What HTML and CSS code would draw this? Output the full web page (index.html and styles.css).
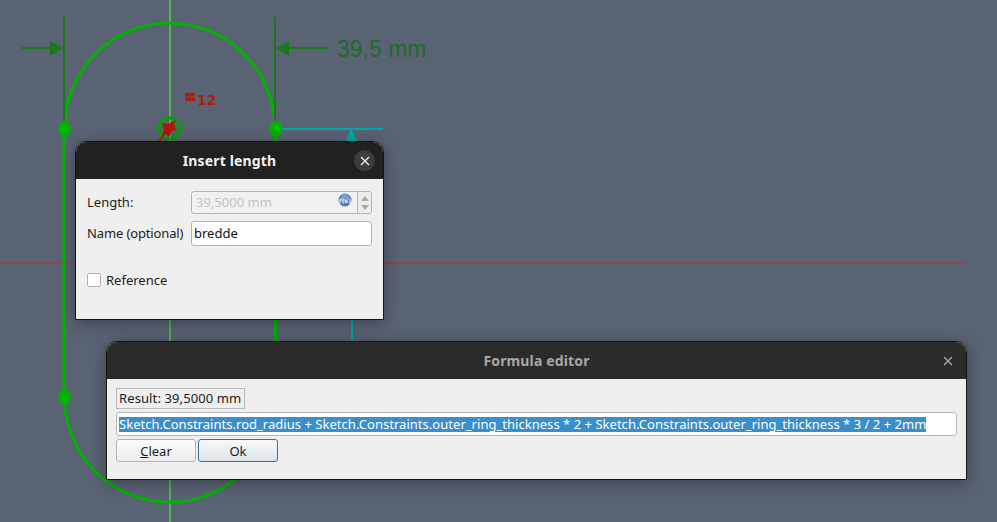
FILE: index.html
```html
<!DOCTYPE html>
<html lang="en">
<head>
  <meta charset="UTF-8">
  <title>Insert length</title>
  <link rel="stylesheet" href="styles.css">
</head>
<body>
  <svg class="sketch" width="997" height="522" viewBox="0 0 997 522">
    <line class="axis-red" x1="0" y1="263" x2="966" y2="263"/>
    <line class="axis-green" x1="170" y1="0" x2="170" y2="522"/>
    <path class="geo" d="M64.5 129 A105.25 106 0 0 1 275 129"/>
    <path class="geo" d="M64.5 397 A105.25 105.25 0 0 0 275 397"/>
    <line class="geo" x1="64" y1="129" x2="64" y2="397"/>
    <line class="geo" x1="275.500" y1="129" x2="275.500" y2="397"/>
    <line class="dim" x1="64" y1="17" x2="64" y2="129"/>
    <line class="dim" x1="275" y1="17" x2="275" y2="129"/>
    <line class="dim" x1="21" y1="48" x2="52" y2="48"/>
    <line class="dim" x1="287" y1="48" x2="329" y2="48"/>
    <polygon class="dim-head" points="50,41 50,56 63,48"/>
    <polygon class="dim-head" points="289,41 289,56 276,48"/>
    <text class="dim-text" x="337" y="57">39,5 mm</text>
    <line class="teal" x1="275" y1="129" x2="383" y2="129"/>
    <line class="teal" x1="352" y1="320" x2="352" y2="342"/>
    <polygon class="teal-fill" points="351,129 358,142 345,142"/>
    <ellipse class="point" cx="64.500" cy="129" rx="6.500" ry="7.500"/>
    <ellipse class="point" cx="276" cy="129" rx="6.500" ry="7.500"/>
    <ellipse class="point" cx="64.500" cy="397" rx="6.500" ry="7.500"/>
    <circle class="ring" cx="169.500" cy="128.500" r="10.500"/>
    <polygon class="red-star" points="176,120 174,125 177,130 172,131 169,137 166,134 162,135 164,129 162,123 168,124"/>
    <line class="red-tail" x1="164" y1="134" x2="159" y2="142"/>
    <rect class="red-fill" x="185" y="93" width="10" height="3.500"/>
    <rect class="red-fill" x="185" y="97.500" width="10" height="3.500"/>
    <text class="red-text" x="197" y="104.500">12</text>
  </svg>

  <section class="dialog dialog-length">
    <header class="titlebar">
      <h1 class="title">Insert length</h1>
      <button class="close close-round" type="button">
        <svg width="10" height="10" viewBox="0 0 10 10"><path d="M1 1 L9 9 M9 1 L1 9"/></svg>
      </button>
    </header>
    <div class="length-body">
      <div class="form-grid">
        <span class="label">Length:</span>
        <div class="field field-spin">
          <span class="field-value">39,5000 mm</span>
          <svg class="fx" width="14" height="14" viewBox="0 0 14 14">
            <circle cx="7" cy="7" r="6.500" fill="#5078b4"/>
            <circle cx="7" cy="5" r="4" fill="#7d9ccb"/>
            <text x="7" y="9.500" text-anchor="middle">f(x)</text>
          </svg>
          <div class="spin">
            <span class="arrow-up"></span>
            <span class="arrow-down"></span>
          </div>
        </div>
        <span class="label label-name">Name (optional)</span>
        <div class="field field-name">bredde</div>
      </div>
      <label class="check-row">
        <span class="checkbox"></span>
        <span class="check-label">Reference</span>
      </label>
    </div>
  </section>

  <section class="dialog dialog-formula">
    <header class="titlebar titlebar-inactive">
      <h1 class="title">Formula editor</h1>
      <button class="close" type="button">
        <svg width="10" height="10" viewBox="0 0 10 10"><path d="M1 1 L9 9 M9 1 L1 9"/></svg>
      </button>
    </header>
    <div class="formula-body">
      <div class="result">Result: 39,5000 mm</div>
      <div class="formula-input"><span class="selected">Sketch.Constraints.rod_radius + Sketch.Constraints.outer_ring_thickness * 2 + Sketch.Constraints.outer_ring_thickness * 3 / 2 + 2mm</span></div>
      <div class="buttons">
        <button class="btn" type="button"><u>C</u>lear</button>
        <button class="btn btn-default" type="button">Ok</button>
      </div>
    </div>
  </section>
</body>
</html>
```

FILE: styles.css
```css
* {
  box-sizing: border-box;
  margin: 0;
  padding: 0;
}

html, body {
  width: 997px;
  height: 522px;
  overflow: hidden;
}

body {
  position: relative;
  background: #5a6374;
  font-family: "Noto Sans", sans-serif;
  font-size: 13px;
  color: #1c1c1c;
}

/* sketch canvas */
.sketch {
  position: absolute;
  left: 0;
  top: 0;
  display: block;
}

.axis-red { stroke: #8a4850; stroke-width: 2; }
.axis-green { stroke: #4fb556; stroke-width: 2; }
.geo { stroke: #00b400; stroke-width: 3; fill: none; }
.dim { stroke: #187a18; stroke-width: 2; }
.dim-head { fill: #187a18; }
.dim-text {
  font-family: "Liberation Sans", sans-serif;
  font-size: 23px;
  fill: #1f6b2a;
}
.teal { stroke: #00aaa8; stroke-width: 2; }
.teal-fill { fill: #00aaa8; }
.point { fill: #00b400; }
.ring { fill: none; stroke: #00a400; stroke-width: 3; }
.red-star { fill: #b01800; }
.red-tail { stroke: #b01800; stroke-width: 1.500; }
.red-fill { fill: #ac1e10; }
.red-text {
  font-family: "DejaVu Sans", sans-serif;
  font-size: 14px;
  font-weight: bold;
  fill: #ac1e10;
}

/* windows */
.dialog {
  position: absolute;
  display: flex;
  flex-direction: column;
  background: #efefef;
  border: 1px solid #141414;
  border-radius: 11px 11px 0 0;
  box-shadow: 0 3px 16px rgba(0, 0, 0, 0.35);
}

.dialog-length {
  left: 75px;
  top: 141px;
  width: 309px;
  height: 179px;
}

.dialog-formula {
  left: 106px;
  top: 341px;
  width: 861px;
  height: 139px;
  background: #eeeeee;
}

.titlebar {
  display: flex;
  align-items: center;
  justify-content: center;
  position: relative;
  height: 37px;
  flex: none;
  background: #212121;
  border-radius: 10px 10px 0 0;
  color: #f2f2f2;
}

.titlebar-inactive {
  background: #2b2b2b;
  color: #a8a8a8;
}

.title {
  font-size: 14px;
  font-weight: 700;
  letter-spacing: 0.15px;
}

.close {
  position: absolute;
  right: 8px;
  top: 8px;
  display: flex;
  align-items: center;
  justify-content: center;
  width: 21px;
  height: 21px;
  border: 0;
  background: none;
}

.close path {
  stroke: #a8a8a8;
  stroke-width: 1.300;
  fill: none;
}

.close-round {
  right: 8px;
  background: #3d3d3d;
  border-radius: 50%;
}

.close-round path {
  stroke: #f2f2f2;
}

/* insert length */
.length-body {
  padding: 12px 11px 0;
}

.form-grid {
  display: grid;
  grid-template-columns: 104px 181px;
  row-gap: 7px;
  align-items: center;
}

.label {
  padding-bottom: 2px;
  white-space: nowrap;
}

.label-name {
  letter-spacing: -0.13px;
}

.field {
  display: flex;
  align-items: center;
  background: #fff;
  border: 1px solid #b4b4b4;
  border-radius: 3px;
}

.field-spin {
  height: 23px;
  position: relative;
  padding-left: 4px;
  background: #f1f1f1;
}

.field-value {
  flex: 1;
  padding-bottom: 2px;
  color: #c4c4c4;
}

.fx {
  position: absolute;
  right: 19px;
  top: 1px;
}

.fx text {
  font-family: "DejaVu Sans", sans-serif;
  font-size: 6px;
  font-weight: bold;
  fill: #e6edf7;
}

.spin {
  display: flex;
  flex-direction: column;
  align-items: center;
  justify-content: center;
  gap: 4px;
  width: 14px;
  height: 100%;
  background: #ededed;
  border-left: 1px solid #b4b4b4;
  border-radius: 0 3px 3px 0;
}

.arrow-up, .arrow-down {
  width: 0;
  height: 0;
  border-left: 4px solid transparent;
  border-right: 4px solid transparent;
}

.arrow-up { border-bottom: 5px solid #a8a8a8; }
.arrow-down { border-top: 5px solid #a8a8a8; }

.field-name {
  height: 25px;
  padding: 0 0 2px 2px;
  color: #101010;
}

.check-row {
  display: flex;
  align-items: center;
  gap: 5px;
  margin-top: 25px;
}

.checkbox {
  width: 14px;
  height: 14px;
  background: #fff;
  border: 1px solid #b4b4b4;
  border-radius: 2px;
}

/* formula editor */
.formula-body {
  display: flex;
  flex-direction: column;
  align-items: flex-start;
  padding: 9px 9px 0;
}

.result {
  width: 129px;
  height: 21px;
  padding: 0 2px;
  line-height: 19px;
  letter-spacing: 0.11px;
  border: 1px solid #b8b8b8;
  white-space: nowrap;
}

.formula-input {
  display: flex;
  align-items: center;
  width: 841px;
  height: 24px;
  margin-top: 3px;
  padding-left: 2px;
  background: #fff;
  border: 1px solid #b4b4b4;
  border-radius: 3px;
  white-space: nowrap;
}

.selected {
  background: #3a8ecb;
  color: #fff;
  line-height: 15px;
  letter-spacing: 0.03px;
}

.buttons {
  display: flex;
  gap: 2px;
  margin-top: 3px;
}

.btn {
  width: 80px;
  height: 23px;
  font: inherit;
  color: #1c1c1c;
  background: linear-gradient(#fcfcfc, #ececec);
  border: 1px solid #b4b4b4;
  border-radius: 3px;
}

.btn-default {
  background: linear-gradient(#f6f9fb, #dce3ea);
  border-color: #2f74a3;
}
```
